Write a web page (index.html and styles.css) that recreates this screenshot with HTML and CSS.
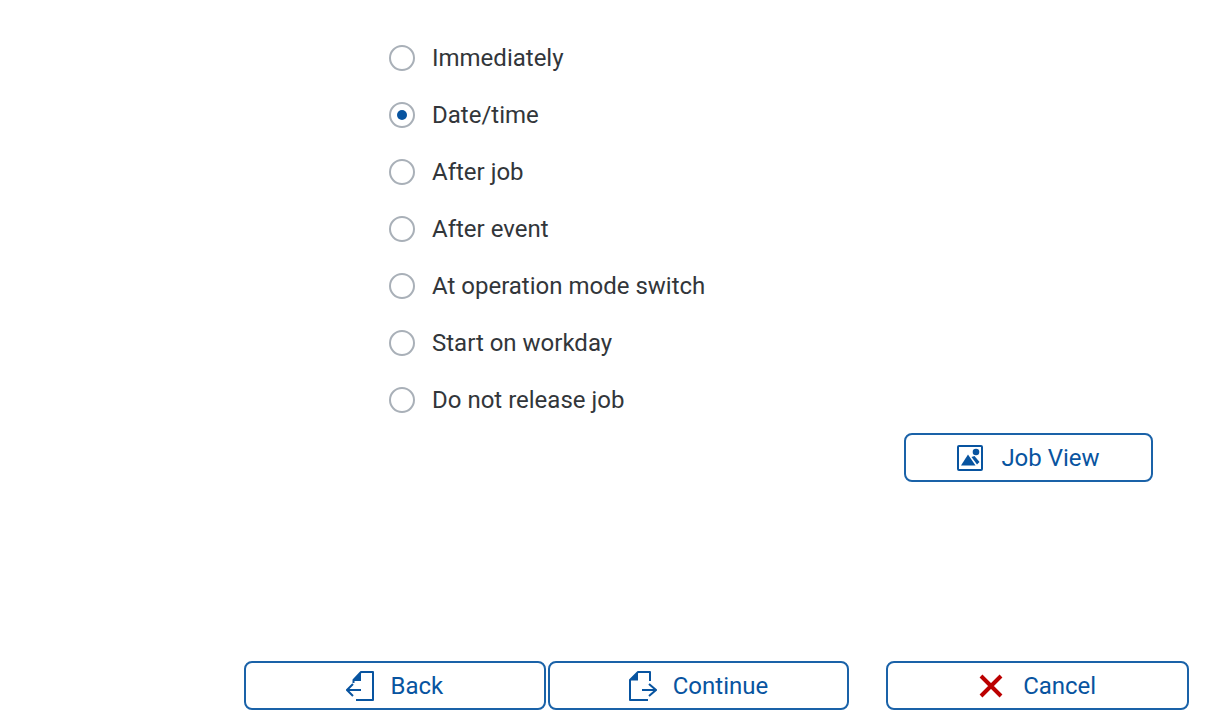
FILE: index.html
```
<!DOCTYPE html>
<html lang="en">
<head>
<meta charset="utf-8">
<meta name="viewport" content="width=device-width, initial-scale=1">
<title>Start condition</title>
<link rel="stylesheet" href="styles.css">
</head>
<body>
<form class="wizard">
  <fieldset class="options" aria-label="Start condition">
    <label class="option"><input class="radio" type="radio" name="start"><span>Immediately</span></label>
    <label class="option"><input class="radio" type="radio" name="start" checked><span>Date/time</span></label>
    <label class="option"><input class="radio" type="radio" name="start"><span>After job</span></label>
    <label class="option"><input class="radio" type="radio" name="start"><span>After event</span></label>
    <label class="option"><input class="radio" type="radio" name="start"><span>At operation mode switch</span></label>
    <label class="option"><input class="radio" type="radio" name="start"><span>Start on workday</span></label>
    <label class="option"><input class="radio" type="radio" name="start"><span>Do not release job</span></label>
  </fieldset>
  <div class="view-row">
    <button class="button button-view" type="button">
      <svg class="icon icon-view" viewBox="0 0 26 26" aria-hidden="true">
        <rect x="1" y="1" width="24" height="24" rx="1" fill="none" stroke="currentColor" stroke-width="2"/>
        <path d="M4 20.500L11 9.500L18.500 20.500Z" fill="currentColor"/>
        <circle cx="19" cy="7" r="3.300" fill="currentColor"/>
        <path d="M14.500 12L17.500 11L22.500 17L20 19.500Z" fill="currentColor"/>
      </svg>
      <span>Job View</span>
    </button>
  </div>
  <div class="actions">
    <div class="steps">
      <button class="button" type="button">
        <svg class="icon icon-page" viewBox="0 0 28 30" aria-hidden="true">
          <g fill="none" stroke="currentColor" stroke-width="2">
            <path d="M7.500 12V9L15 1H27V29H10" stroke-linejoin="round"/>
            <path d="M15 19H1M7 13L1 19L7 25"/>
          </g>
          <path d="M7 10L15 1V10Z" fill="currentColor"/>
        </svg>
        <span>Back</span>
      </button>
      <button class="button" type="button">
        <svg class="icon icon-page" viewBox="0 0 28 30" aria-hidden="true">
          <g fill="none" stroke="currentColor" stroke-width="2">
            <path d="M21 10V1H9L1 9V29H19" stroke-linejoin="round"/>
            <path d="M13 19H27M20 13L27 19L20 25"/>
          </g>
          <path d="M1 9.500L9 1V9.500Z" fill="currentColor"/>
        </svg>
        <span>Continue</span>
      </button>
    </div>
    <button class="button button-cancel" type="button">
      <svg class="icon icon-cancel" viewBox="0 0 24 24" aria-hidden="true">
        <path d="M2 2L22 22M22 2L2 22" fill="none" stroke="currentColor" stroke-width="4"/>
      </svg>
      <span>Cancel</span>
    </button>
  </div>
</form>
</body>
</html>
```
FILE: styles.css
```
* {
  box-sizing: border-box;
}

body {
  margin: 0;
  background: #fff;
  color: #32363a;
  font-family: Roboto, "Liberation Sans", sans-serif;
  font-size: 24px;
  line-height: 28px;
}

.wizard {
  display: flex;
  flex-direction: column;
  min-height: 100vh;
  padding: 29px 28px 4px 244px;
}

.options {
  display: flex;
  flex-direction: column;
  margin: 0 0 5px;
  padding: 0 0 0 145px;
  border: 0;
}

.option {
  display: flex;
  align-items: center;
  align-self: flex-start;
  gap: 17px;
  height: 57px;
}

.radio {
  appearance: none;
  display: grid;
  place-items: center;
  width: 26px;
  height: 26px;
  margin: 0;
  border: 2px solid #a9b0b8;
  border-radius: 50%;
  background: #fff;
}

.radio:checked::before {
  content: "";
  width: 10px;
  height: 10px;
  border-radius: 50%;
  background: #0854a0;
}

.view-row {
  display: flex;
  justify-content: flex-end;
  padding-right: 36px;
}

.button {
  display: flex;
  align-items: center;
  justify-content: center;
  gap: 16px;
  height: 49px;
  padding: 0 12px;
  border: 2px solid #1a62a8;
  border-radius: 8px;
  background: #fff;
  color: #0854a0;
  font: inherit;
}

.button-view {
  width: 249px;
  gap: 18px;
}

.actions {
  display: grid;
  grid-template-columns: 2fr 1fr;
  gap: 37px;
  margin-top: auto;
}

.steps {
  display: grid;
  grid-template-columns: 1fr 1fr;
  gap: 2px;
}

.button-cancel {
  gap: 20px;
}

.icon {
  flex: none;
}

.icon-view {
  width: 26px;
  height: 26px;
}

.icon-page {
  width: 28px;
  height: 30px;
}

.icon-cancel {
  width: 24px;
  height: 24px;
  color: #b00;
}
```
